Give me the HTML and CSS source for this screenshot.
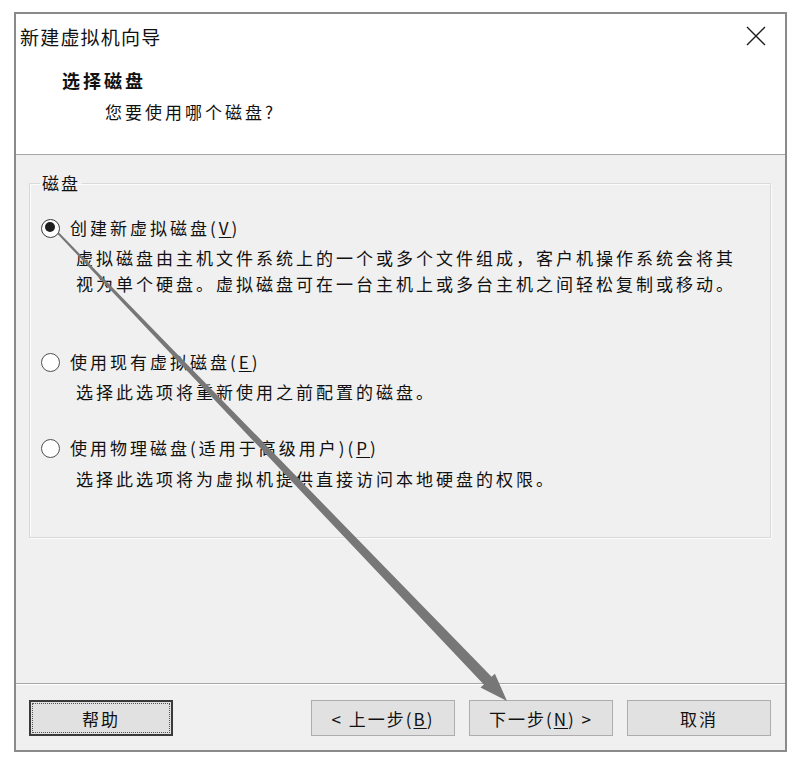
FILE: index.html
```html
<!DOCTYPE html>
<html lang="zh-CN">
<head>
<meta charset="utf-8">
<title>新建虚拟机向导</title>
<link rel="stylesheet" href="styles.css">
</head>
<body>
<div class="window">
  <div class="titlebar">
    <span class="title">新建虚拟机向导</span>
    <svg class="close" width="20" height="20" viewBox="0 0 20 20"><path d="M1 1 L19 19 M19 1 L1 19" stroke="#1e1e1e" stroke-width="1.4" fill="none"/></svg>
  </div>
  <div class="header">
    <div class="h-title">选择磁盘</div>
    <div class="h-sub">您要使用哪个磁盘?</div>
  </div>
  <div class="content">
    <fieldset class="group">
      <legend class="legend">磁盘</legend>
      <div class="option opt1">
        <div class="opt-label"><span class="radio checked"></span><span>创建新虚拟磁盘(<u>V</u>)</span></div>
        <div class="desc">虚拟磁盘由主机文件系统上的一个或多个文件组成，客户机操作系统会将其<br>视为单个硬盘。虚拟磁盘可在一台主机上或多台主机之间轻松复制或移动。</div>
      </div>
      <div class="option opt2">
        <div class="opt-label"><span class="radio"></span><span>使用现有虚拟磁盘(<u>E</u>)</span></div>
        <div class="desc">选择此选项将重新使用之前配置的磁盘。</div>
      </div>
      <div class="option opt3">
        <div class="opt-label"><span class="radio"></span><span>使用物理磁盘(适用于高级用户)(<u>P</u>)</span></div>
        <div class="desc">选择此选项将为虚拟机提供直接访问本地硬盘的权限。</div>
      </div>
    </fieldset>
  </div>
  <div class="footer">
    <button class="btn default">帮助</button>
    <div class="spacer"></div>
    <button class="btn">&lt; 上一步(<u>B</u>)</button>
    <button class="btn">下一步(<u>N</u>) &gt;</button>
    <button class="btn">取消</button>
  </div>
</div>
<svg class="arrow" width="805" height="766" viewBox="0 0 805 766">
  <polygon points="57.3,233.7 483.8,684.4 480.5,687.5 507,701 494.9,673.7 491.6,676.8 58.7,232.3" fill="#777777"/>
</svg>
</body>
</html>
```
FILE: styles.css
```css
html, body {
  margin: 0;
  padding: 0;
  background: #ffffff;
}
body {
  width: 805px;
  height: 766px;
  position: relative;
  overflow: hidden;
  font-family: "Noto Sans CJK SC", "Noto Sans", sans-serif;
  color: #111111;
  font-size: 17px;
}
.window {
  margin: 12px 0 0 14px;
  width: 773px;
  height: 740px;
  box-sizing: border-box;
  border: 2px solid #8a8a8a;
  background: #f0f0f0;
  display: flex;
  flex-direction: column;
}
.titlebar {
  height: 46px;
  flex: none;
  background: #ffffff;
  display: flex;
  align-items: center;
  justify-content: space-between;
  padding: 0 19px 0 4px;
}
.title {
  font-size: 19px;
  letter-spacing: 1.2px;
  line-height: 24px;
  margin-top: -1px;
}
.close {
  display: block;
  margin-top: -2px;
}
.header {
  height: 94px;
  flex: none;
  background: #ffffff;
  border-bottom: 1px solid #a6a6a6;
  display: flex;
  flex-direction: column;
}
.h-title {
  font-weight: bold;
  font-size: 18px;
  letter-spacing: 3px;
  line-height: 24px;
  padding-left: 46px;
  margin-top: 8px;
}
.h-sub {
  letter-spacing: 3px;
  line-height: 24px;
  padding-left: 89px;
  margin-top: 8px;
}
.content {
  flex: 1;
  padding: 17px 14px 0 13px;
}
.group {
  margin: 0;
  padding: 0 0 0 10px;
  height: 366px;
  box-sizing: border-box;
  border: 1px solid #d9d9d9;
  box-shadow: 1px 1px 0 #fbfbfb inset, 1px 1px 0 #fbfbfb;
}
.legend {
  padding: 0 2px;
  line-height: 22px;
  letter-spacing: 2px;
}
.option {
  letter-spacing: 3px;
}
.opt-label {
  display: flex;
  align-items: center;
  gap: 10px;
  line-height: 24px;
  margin-left: 2px;
}
.opt1 { margin-top: 22px; }
.opt2 { margin-top: 53px; }
.opt3 { margin-top: 31px; }
.desc {
  padding-left: 36px;
  line-height: 26px;
  margin-top: 5px;
}
.opt3 .desc { margin-top: 6px; }
.radio {
  width: 19px;
  height: 19px;
  box-sizing: border-box;
  border: 1.6px solid #505050;
  border-radius: 50%;
  background: #ffffff;
  flex: none;
  position: relative;
  margin-left: -1px;
}
.radio.checked {
  border-color: #3a3a3a;
}
.radio.checked::after {
  content: "";
  position: absolute;
  left: 2.9px;
  top: 2.9px;
  width: 10px;
  height: 10px;
  border-radius: 50%;
  background: #1e1e1e;
}
u {
  text-decoration: underline;
  text-underline-offset: 2px;
}
.footer {
  flex: none;
  height: 67px;
  box-sizing: border-box;
  border-top: 1px solid #a6a6a6;
  box-shadow: 0 1px 0 #ffffff inset;
  padding: 16px 14px 14px 13px;
  display: flex;
  gap: 14px;
}
.spacer {
  flex: 1;
}
.btn {
  width: 144px;
  height: 36px;
  box-sizing: border-box;
  background: #e1e1e1;
  border: 1px solid #adadad;
  font-family: inherit;
  font-size: 17px;
  letter-spacing: 2px;
  color: #111111;
  padding: 0;
  margin: 0;
}
.btn.default {
  border: 2px solid #3a3a3a;
  outline: 1px dotted #555555;
  outline-offset: -4px;
}
.arrow {
  position: absolute;
  left: 0;
  top: 0;
  pointer-events: none;
}
```
